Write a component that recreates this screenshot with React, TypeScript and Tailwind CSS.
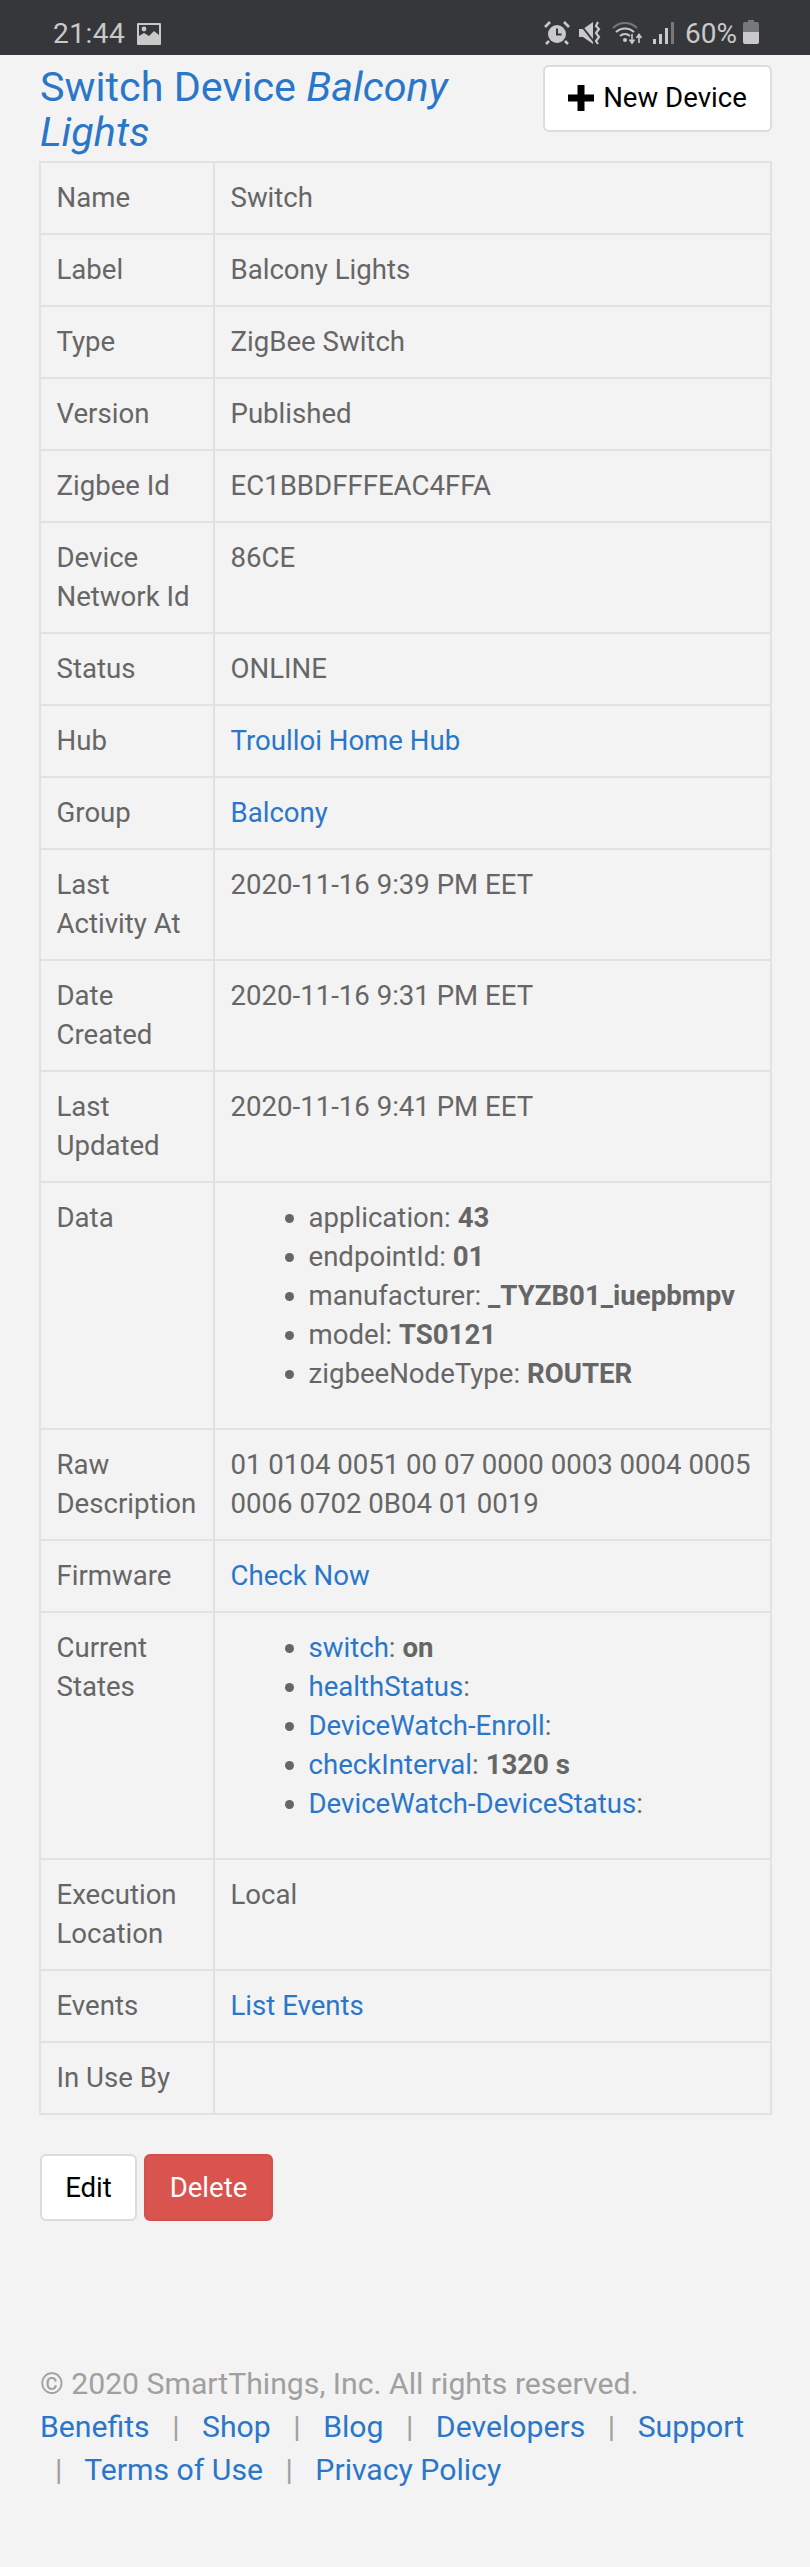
import React from 'react'

const Link = ({ children }: { children: React.ReactNode }) => <a className="text-[#2a77c9]">{children}</a>

const Row = ({ label, children }: { label: string; children?: React.ReactNode }) => (
  <tr>
    <td className="w-[174px] border-2 border-[#e2e2e2] px-[15.5px] pt-[14.5px] pb-[16.5px] align-top">{label}</td>
    <td className="border-2 border-[#e2e2e2] px-[15.5px] pt-[14.5px] pb-[16.5px] align-top">{children}</td>
  </tr>
)

const Sep = () => <span className="px-[15px]">|</span>

const StatusBar = () => (
  <div className="flex h-[55px] items-start justify-between bg-[#36373b] pr-[51px] pl-[53px] pt-[20px] text-[#c9c9c9]">
    <div className="flex items-center gap-[12px]">
      <span className="text-[28px] leading-[28px] tracking-[0.5px]">21:44</span>
      <svg width="24" height="22" viewBox="0 0 24 22">
        <path fill="#c9c9c9" fillRule="evenodd" d="M1 0h22a1 1 0 0 1 1 1v20a1 1 0 0 1-1 1H1a1 1 0 0 1-1-1V1a1 1 0 0 1 1-1zM2 2v11l5-3 5 3 5-5 5 4V2z" />
        <circle cx="7" cy="6" r="2.4" fill="#c9c9c9" />
      </svg>
    </div>
    <div className="flex items-start">
      <svg width="26" height="24" viewBox="0 0 26 24" className="mt-[1px]">
        <circle cx="13" cy="13" r="9" fill="#c9c9c9" />
        <path d="M13 7.5v6h4.5" fill="none" stroke="#36373b" strokeWidth="2" />
        <path d="M1 6l5-5M25 6l-5-5M5 20l-3 3M21 20l3 3" stroke="#c9c9c9" strokeWidth="2.6" fill="none" />
      </svg>
      <svg width="24" height="24" viewBox="0 0 24 24" className="ml-[9px] mt-[1px]">
        <path fill="#c9c9c9" d="M0 8h4l10-7v22L4 16H0z" />
        <path d="M1 3l15 19" stroke="#36373b" strokeWidth="2" />
        <path d="M19 1l-2 4 3 3-3 4 3 4-3 4 2 3" fill="none" stroke="#c9c9c9" strokeWidth="2.2" />
      </svg>
      <svg width="32" height="24" viewBox="0 0 32 24" className="ml-[9px] mt-[1px]">
        <path d="M1 7a17 17 0 0 1 24 0" fill="none" stroke="#77787b" strokeWidth="2" />
        <path d="M4 11a13 13 0 0 1 18 0" fill="none" stroke="#c9c9c9" strokeWidth="2" />
        <path d="M8 15a7.500 7.500 0 0 1 10 0" fill="none" stroke="#c9c9c9" strokeWidth="2" />
        <circle cx="13" cy="19" r="2" fill="#c9c9c9" />
        <path d="M20 13v8m-2.500-2.500L20 22l2.500-3.500M27 22v-8m-2.500 3L27 13.500l2.500 3.500" fill="none" stroke="#c9c9c9" strokeWidth="1.600" />
      </svg>
      <svg width="22" height="24" viewBox="0 0 22 24" className="ml-[9px] mt-[1px]">
        <rect x="0" y="18" width="3" height="5" fill="#c9c9c9" />
        <rect x="6" y="13" width="3" height="10" fill="#c9c9c9" />
        <rect x="12" y="7" width="3" height="16" fill="#c9c9c9" />
        <rect x="18" y="1" width="3" height="22" fill="#77787b" />
      </svg>
      <span className="ml-[10px] text-[28px] leading-[28px]">60%</span>
      <svg width="16" height="24" viewBox="0 0 16 24" className="ml-[6px]">
        <path fill="#77787b" d="M5 0h6v2h3a2 2 0 0 1 2 2v8H0V4a2 2 0 0 1 2-2h3z" />
        <path fill="#c9c9c9" d="M0 12h16v10a2 2 0 0 1-2 2H2a2 2 0 0 1-2-2z" />
      </svg>
    </div>
  </div>
)

export default function App() {
  return (
    <div className="min-h-[2567px] bg-[#f3f3f3] font-['Roboto',sans-serif] text-[27.6px] leading-[39px] text-[#666666]">
      <StatusBar />

      <div className="px-[40px]">
        <div className="flex items-start justify-between pt-[10px]">
          <h1 className="w-[480px] text-[41.3px] leading-[45px] font-normal text-[#2a77c9]">
            Switch Device <em>Balcony Lights</em>
          </h1>
          <button className="-mr-[2px] flex h-[67px] w-[229px] items-center justify-center gap-[9px] rounded-[6px] border-2 border-[#dcdcdc] bg-white pb-[2px] text-black">
            <svg width="26" height="26" viewBox="0 0 26 26">
              <path d="M9.500 0h7v9.500H26v7h-9.500V26h-7v-9.500H0v-7h9.500z" fill="#000" />
            </svg>
            New Device
          </button>
        </div>

        <table className="-ml-[1px] mt-[6px] w-[733px] border-collapse">
          <tbody>
            <Row label="Name">Switch</Row>
            <Row label="Label">Balcony Lights</Row>
            <Row label="Type">ZigBee Switch</Row>
            <Row label="Version">Published</Row>
            <Row label="Zigbee Id">EC1BBDFFFEAC4FFA</Row>
            <Row label="Device Network Id">86CE</Row>
            <Row label="Status">ONLINE</Row>
            <Row label="Hub"><Link>Troulloi Home Hub</Link></Row>
            <Row label="Group"><Link>Balcony</Link></Row>
            <Row label="Last Activity At">2020-11-16 9:39 PM EET</Row>
            <Row label="Date Created">2020-11-16 9:31 PM EET</Row>
            <Row label="Last Updated">2020-11-16 9:41 PM EET</Row>
            <Row label="Data">
              <ul className="mb-[19px] list-disc pl-[78px]">
                <li>application: <b>43</b></li>
                <li>endpointId: <b>01</b></li>
                <li>manufacturer: <b>_TYZB01_iuepbmpv</b></li>
                <li>model: <b>TS0121</b></li>
                <li>zigbeeNodeType: <b>ROUTER</b></li>
              </ul>
            </Row>
            <Row label="Raw Description">01 0104 0051 00 07 0000 0003 0004 0005 0006 0702 0B04 01 0019</Row>
            <Row label="Firmware"><Link>Check Now</Link></Row>
            <Row label="Current States">
              <ul className="mb-[19px] list-disc pl-[78px]">
                <li><Link>switch</Link>: <b>on</b></li>
                <li><Link>healthStatus</Link>:</li>
                <li><Link>DeviceWatch-Enroll</Link>:</li>
                <li><Link>checkInterval</Link>: <b>1320 s</b></li>
                <li><Link>DeviceWatch-DeviceStatus</Link>:</li>
              </ul>
            </Row>
            <Row label="Execution Location">Local</Row>
            <Row label="Events"><Link>List Events</Link></Row>
            <Row label="In Use By" />
          </tbody>
        </table>

        <div className="mt-[39px] flex gap-[7px]">
          <button className="h-[67px] w-[97px] rounded-[6px] border-2 border-[#dcdcdc] bg-white text-black">Edit</button>
          <button className="h-[67px] w-[129px] rounded-[6px] border-2 border-[#d64f4b] bg-[#d9534f] text-white">Delete</button>
        </div>

        <div className="mt-[141px] text-[30.2px] leading-[43px] text-[#a0a0a0]">
          <div>© 2020 SmartThings, Inc. All rights reserved.</div>
          <div>
            <Link>Benefits</Link> <Sep /> <Link>Shop</Link> <Sep /> <Link>Blog</Link> <Sep /> <Link>Developers</Link> <Sep /> <Link>Support</Link> <Sep /> <Link>Terms of Use</Link> <Sep /> <Link>Privacy Policy</Link>
          </div>
        </div>
      </div>
    </div>
  )
}
